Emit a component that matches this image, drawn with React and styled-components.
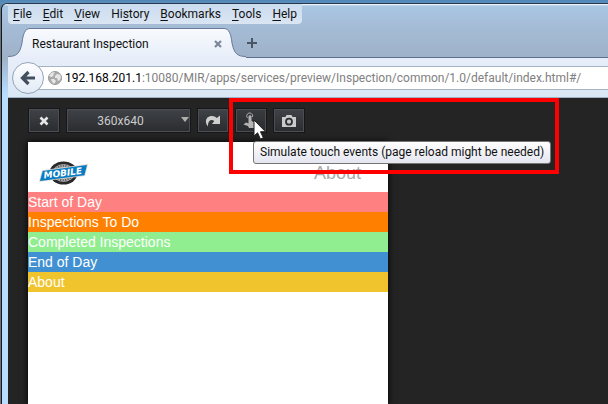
import React from 'react'
import styled, { createGlobalStyle } from 'styled-components'

const menus = [
  ['', 'F', 'ile'],
  ['', 'E', 'dit'],
  ['', 'V', 'iew'],
  ['Hi', 's', 'tory'],
  ['', 'B', 'ookmarks'],
  ['', 'T', 'ools'],
  ['', 'H', 'elp']
]

const links = [
  { label: 'Start of Day', color: '#ff8080' },
  { label: 'Inspections To Do', color: '#ff8000' },
  { label: 'Completed Inspections', color: '#90ee90' },
  { label: 'End of Day', color: '#4191d2' },
  { label: 'About', color: '#f0c42d' }
]

function Logo () {
  return (
    <svg width='50' height='24' viewBox='0 0 50 24' role='img' aria-label='Mobile'>
      <ellipse cx='24.5' cy='12' rx='14' ry='11.5' fill='#29292b' />
      <ellipse cx='24.5' cy='12' rx='11' ry='9' fill='#aaa' />
      <ellipse cx='24.5' cy='12' rx='9' ry='7.2' fill='none' stroke='#555' strokeWidth='2' strokeDasharray='1 1.5' />
      <path d='M3 9.2 L49 3 L46 15 L0 20.8 Z' fill='#d9d5d1' />
      <path d='M3.8 10 L48 4 L45.4 14.2 L1 19.9 Z' fill='#087dc3' />
      <text
        x='5' y='17.5' fill='#fff' fontFamily='DejaVu Sans, sans-serif'
        fontSize='9' fontWeight='700' fontStyle='italic' transform='rotate(-7 5 17.5)'
      >
        MOBILE
      </text>
    </svg>
  )
}

function Globe () {
  return (
    <svg width='14' height='14' viewBox='0 0 14 14' aria-hidden='true'>
      <circle cx='7' cy='7' r='6.5' fill='#aaa' stroke='#999' />
      <path d='M1 5 L3 2 L6 1 L7 2 L5 3 L6 4 L4 6 L2 5.5 Z M7 5 L9 3 L12 3.5 L13 6 L12 9 L10 10 L9 7 L7 7 Z M3 8 L6 8 L8 10 L6 13 L4 11 Z' fill='#e6e6e6' />
    </svg>
  )
}

function Browser () {
  return (
    <Desktop>
      <GlobalStyle />
      <Window>
        <MenuBar>
          {menus.map(([before, key, after]) => (
            <MenuItem key={key + after}>{before}<u>{key}</u>{after}</MenuItem>
          ))}
        </MenuBar>
        <TabStrip>
          <TabEdge width='22' height='30' viewBox='0 0 22 30' aria-hidden='true'>
            <path d='M0 30 V28.5 C9 28.5 12 25 14 15 C15 6 17 .5 22 .5 V30 Z' fill='url(#tabFill)' />
            <path d='M0 28.5 C9 28.5 12 25 14 15 C15 6 17 .5 22 .5' fill='none' stroke='#68799a' />
            <defs>
              <linearGradient id='tabFill' x1='0' y1='0' x2='0' y2='30' gradientUnits='userSpaceOnUse'>
                <stop offset='0' stopColor='#f8fafd' />
                <stop offset='1' stopColor='#e7eef9' />
              </linearGradient>
            </defs>
          </TabEdge>
          <Tab>
            <span>Restaurant Inspection</span>
            <CloseTab aria-label='Close tab'>
              <svg width='8' height='8' viewBox='0 0 8 8'>
                <path d='M1 1 L7 7 M7 1 L1 7' stroke='#7b8798' strokeWidth='2.2' />
              </svg>
            </CloseTab>
          </Tab>
          <TabEdge width='22' height='30' viewBox='0 0 22 30' aria-hidden='true'>
            <path d='M22 30 V28.5 C13 28.5 10 25 8 15 C7 6 5 .5 0 .5 V30 Z' fill='url(#tabFill)' />
            <path d='M22 28.5 C13 28.5 10 25 8 15 C7 6 5 .5 0 .5' fill='none' stroke='#68799a' />
          </TabEdge>
          <NewTab aria-label='New tab'>
            <svg width='12' height='12' viewBox='0 0 12 12'>
              <path d='M6 1 V11 M1 6 H11' stroke='#4a5566' strokeWidth='2' />
            </svg>
          </NewTab>
        </TabStrip>
        <NavBar>
          <BackButton aria-label='Back'>
            <svg width='16' height='16' viewBox='0 0 16 16'>
              <path d='M8.5 2 L2.5 8 L8.5 14 M3 8 H15' fill='none' stroke='#424f5f' strokeWidth='3.2' />
            </svg>
          </BackButton>
          <AddressBar>
            <Globe />
            <Address>
              <b>192.168.201.1</b>
              <input defaultValue=':10080/MIR/apps/services/preview/Inspection/common/1.0/default/index.html#/' />
            </Address>
          </AddressBar>
        </NavBar>
        <Viewport>
          <ToolBar>
            <ToolButton aria-label='Close responsive view'>
              <svg width='10' height='10' viewBox='0 0 10 10'>
                <path d='M1.5 1.5 L8.5 8.5 M8.5 1.5 L1.5 8.5' stroke='#e6e6e6' strokeWidth='2.6' />
              </svg>
            </ToolButton>
            <SizePicker>
              <select aria-label='Screen size'>
                <option>360x640</option>
              </select>
              <svg width='8' height='5' viewBox='0 0 8 5' aria-hidden='true'>
                <path d='M0 0 H8 L4 5 Z' fill='#b0b0aa' />
              </svg>
            </SizePicker>
            <ToolButton aria-label='Rotate'>
              <svg width='16' height='12' viewBox='0 0 16 12'>
                <path d='M3 11.5 C-1 7 1 1 7 1 C9 1 10.5 1.8 11.8 3 L15 .5 V9 H7 L9.3 6 C6 3.5 2.5 6 3 11.5 Z' fill='#cfcfcf' />
              </svg>
            </ToolButton>
            <ToolButton aria-label='Simulate touch events' $pressed>
              <svg width='16' height='18' viewBox='0 0 16 18'>
                <path d='M4.5 6 A3 3 0 1 1 9.5 5' fill='none' stroke='#aaa' strokeWidth='1' />
                <path d='M5.5 4 Q7 2.5 8.5 4 V9 L13 11 L13.5 14 L12 16 H6 L5 14 L.5 12.5 L3 10.5 L5.5 11.5 Z' fill='#b5b5b5' />
              </svg>
              <Cursor width='14' height='22' viewBox='0 0 14 22' aria-hidden='true'>
                <path d='M1 1 V17 L4.6 13.8 L7.4 20 L10.3 18.8 L7.5 12.7 H12.5 Z' fill='#fff' stroke='#222' />
              </Cursor>
              <Tooltip role='tooltip'>Simulate touch events (page reload might be needed)</Tooltip>
            </ToolButton>
            <ToolButton aria-label='Screenshot'>
              <svg width='14' height='12' viewBox='0 0 14 12'>
                <path d='M0 2 H3.5 L4.5 0 H9.5 L10.5 2 H14 V12 H0 Z' fill='#c9c9c9' />
                <circle cx='7' cy='6.7' r='3' fill='#c9c9c9' stroke='#2c2f33' strokeWidth='1.8' />
              </svg>
            </ToolButton>
          </ToolBar>
          <Highlight />
          <Device>
            <DeviceHeader>
              <Logo />
              <h1>About</h1>
            </DeviceHeader>
            <nav>
              {links.map(({ label, color }) => (
                <NavLink key={label} href='#/' $color={color}>{label}</NavLink>
              ))}
            </nav>
          </Device>
        </Viewport>
      </Window>
    </Desktop>
  )
}

const GlobalStyle = createGlobalStyle`
  * {
    box-sizing: border-box;
  }

  body {
    margin: 0;
    font-family: Roboto, 'Open Sans', sans-serif;
    font-size: 12px;
    color: #111;
  }

  button {
    border: 0;
    padding: 0;
    background: none;
    font: inherit;
  }

  svg {
    display: block;
    flex: none;
  }
`

const Desktop = styled.div`
  display: flex;
  min-height: 100vh;
  padding: 3px 0 0 1px;
  background: linear-gradient(#4f86b8, #5d8db9 3px, #6e7378 12px);
  overflow: hidden;
`

const Window = styled.div`
  flex: 1;
  min-width: 0;
  display: flex;
  flex-direction: column;
  border-top: 1px solid #26394e;
  border-left: 1px solid #111a24;
  border-top-left-radius: 6px;
  padding-left: 6px;
  background: linear-gradient(#fff, #a8c6e2 2px, #a6bdd8 20px, #9eb2c8 54px, #b9dcff 90px);
`

const MenuBar = styled.div`
  align-self: flex-start;
  display: flex;
  gap: 11px;
  height: 20px;
  padding: 0 5px;
  border-radius: 0 0 4px 4px;
  background: linear-gradient(#cbdcef, #dae5f2);
`

const MenuItem = styled.button`
  line-height: 20px;
  color: #111;

  u {
    text-underline-offset: 2px;
  }
`

const TabStrip = styled.div`
  display: flex;
  align-items: flex-end;
  height: 34px;
  padding-top: 4px;
  background: linear-gradient(#5d6f8a, #5d6f8a) bottom / 100% 1px no-repeat;
`

const TabEdge = styled.svg`
  width: 22px;
`

const Tab = styled.div`
  display: flex;
  align-items: center;
  justify-content: space-between;
  width: 194px;
  height: 30px;
  padding-left: 2px;
  border-top: 1px solid #68799a;
  background: linear-gradient(#f8fafd, #e7eef9);
`

const CloseTab = styled.button`
  padding: 2px;
`

const NewTab = styled.button`
  align-self: center;
`

const NavBar = styled.div`
  display: flex;
  align-items: center;
  height: 40px;
  padding-left: 4px;
  border-bottom: 1px solid #9fb2c6;
  background: linear-gradient(#e7eef9, #d9e7f4);
`

const BackButton = styled.button`
  z-index: 1;
  display: flex;
  align-items: center;
  justify-content: center;
  width: 32px;
  height: 32px;
  border: 1px solid #94a3b7;
  border-radius: 50%;
  background: linear-gradient(#fcfdff, #e2ebf5);
`

const AddressBar = styled.div`
  flex: 1;
  min-width: 0;
  display: flex;
  align-items: center;
  gap: 3px;
  height: 24px;
  margin-left: -8px;
  padding-left: 12px;
  border: solid #a4b4c6;
  border-width: 1px 0;
  background: #fff;
`

const Address = styled.label`
  flex: 1;
  display: flex;
  line-height: 20px;

  b {
    font-weight: 400;
    color: #000;
  }

  input {
    flex: 1;
    min-width: 0;
    border: 0;
    padding: 0;
    outline: 0;
    background: none;
    font: inherit;
    color: #808080;
  }
`

const Viewport = styled.main`
  position: relative;
  flex: 1;
  padding: 10px 20px 0;
  background: #242424;
  display: flex;
  flex-direction: column;
`

const ToolBar = styled.div`
  display: flex;
  gap: 6px;
  margin-bottom: 9px;
`

const ToolButton = styled.button`
  position: relative;
  display: flex;
  align-items: center;
  justify-content: center;
  width: 32px;
  height: 25px;
  border: 1px solid #15171a;
  box-shadow: inset 0 0 0 1px #4a4d51;
  background: ${props => props.$pressed ? 'linear-gradient(#393b3e, #292b2e)' : 'linear-gradient(#3f4247, #2a2c2f)'};
`

const SizePicker = styled.label`
  position: relative;
  display: flex;
  align-items: center;
  width: 125px;
  height: 25px;
  border: 1px solid #15171a;
  box-shadow: inset 0 0 0 1px #4a4d51;
  background: linear-gradient(#3f4247, #2a2c2f);

  select {
    flex: 1;
    appearance: none;
    border: 0;
    padding: 0 16px 0 0;
    background: none;
    color: #ccc;
    font: inherit;
    text-align: center;
    text-align-last: center;
  }

  svg {
    position: absolute;
    top: 8px;
    right: 1px;
  }
`

const Cursor = styled.svg`
  position: absolute;
  z-index: 4;
  top: 10px;
  left: 17px;
`

const Tooltip = styled.span`
  position: absolute;
  z-index: 2;
  top: 32px;
  left: 17px;
  height: 23px;
  padding: 0 6px;
  border: 1px solid #767676;
  border-radius: 3px;
  background: linear-gradient(#fff, #e4e5f0);
  color: #111;
  line-height: 21px;
  white-space: nowrap;
`

const Highlight = styled.div`
  position: absolute;
  z-index: 1;
  top: 0;
  left: 221px;
  width: 330px;
  height: 76px;
  border: 4px solid #f00;
  pointer-events: none;
`

const Device = styled.section`
  flex: 1;
  width: 360px;
  background: #fff;
  box-shadow: 0 0 7px #000;
  font-family: 'Liberation Sans', Arial, sans-serif;
`

const DeviceHeader = styled.header`
  display: flex;
  align-items: center;
  justify-content: space-between;
  height: 50px;
  padding: 12px 27px 0 11px;

  h1 {
    margin: 0;
    font-size: 18px;
    font-weight: 400;
    line-height: 24px;
    color: #aaa;
  }
`

const NavLink = styled.a`
  display: block;
  background: ${props => props.$color};
  color: #fff;
  font-size: 14px;
  line-height: 20px;
  text-decoration: none;
`

export default Browser
